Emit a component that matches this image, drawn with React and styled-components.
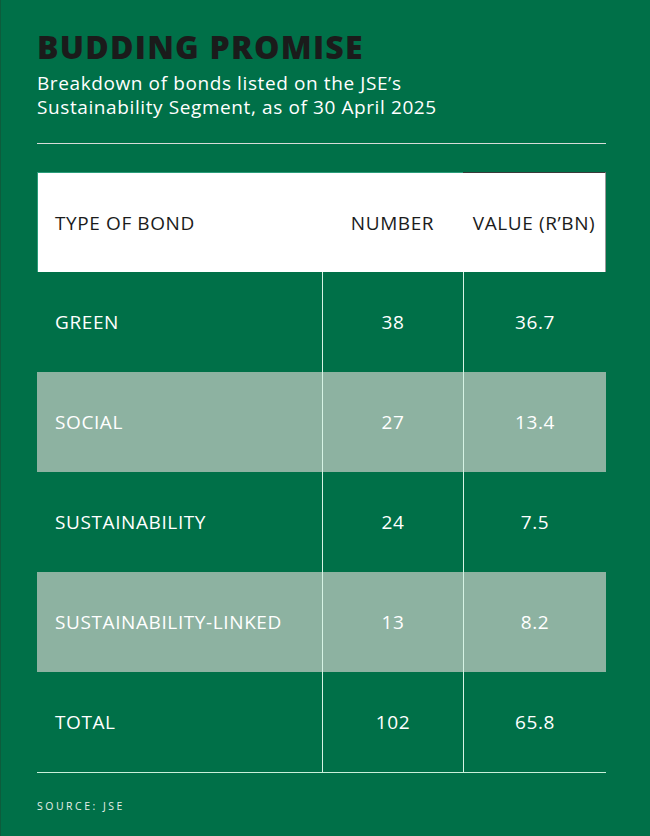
import React from "react";
import styled, { createGlobalStyle } from "styled-components";

const Global = createGlobalStyle`
  html, body { margin: 0; padding: 0; background: #007048; }
  #root { width: 650px; }
`;

const Page = styled.div`
  box-sizing: border-box;
  width: 650px;
  height: 836px;
  background: #007048;
  border-left: 1px solid #0d5c3c;
  padding: 30px 44px 0 36px;
  font-family: "Open Sans", "Liberation Sans", sans-serif;
  color: #ffffff;
`;

const Title = styled.h1`
  margin: 0;
  font-family: "Open Sans", sans-serif;
  font-weight: 800;
  font-size: 32px;
  line-height: 34px;
  color: #1b1b1b;
  letter-spacing: 1.25px;
`;

const Subtitle = styled.p`
  margin: 7px 0 0;
  font-size: 19px;
  line-height: 24px;
  font-weight: 400;
  letter-spacing: 0.6px;
  color: #ffffff;
`;

const Rule = styled.hr`
  margin: 24px 0 0;
  border: 0;
  height: 1px;
  background: #d6dcd8;
`;

const Table = styled.div`
  margin-top: 28px;
  display: flex;
  flex-direction: column;
`;

const Row = styled.div`
  display: grid;
  grid-template-columns: 285px 141px 1fr;
  height: 100px;
  background: ${(p) =>
    p.$kind === "head" ? "#ffffff" : p.$kind === "band" ? "#8db2a1" : "transparent"};
  color: ${(p) => (p.$kind === "head" ? "#1b1b1b" : "#ffffff")};
  border-bottom: ${(p) => (p.$last ? "1px solid #c9f0da" : "none")};
  ${(p) => p.$kind === "head" && "box-shadow: inset 1px 0 0 #2a9c7a;"}
`;

const Cell = styled.div`
  display: flex;
  align-items: center;
  justify-content: ${(p) => (p.$align === "center" ? "center" : "flex-start")};
  padding-left: ${(p) => (p.$align === "center" ? "0" : "18px")};
  font-size: 19px;
  letter-spacing: 0.6px;
  border-left: ${(p) => (p.$divider ? "1px solid #d6f3e4" : "none")};
  border-top: ${(p) => (p.$top ? `1px solid ${p.$top}` : "none")};
  border-right: ${(p) => (p.$right ? `1px solid ${p.$right}` : "none")};
  box-sizing: border-box;
`;

const Source = styled.div`
  margin-top: 26px;
  font-size: 10.5px;
  letter-spacing: 2.5px;
  color: #e6efe9;
`;

const rows = [
  { type: "GREEN", num: "38", val: "36.7", kind: "plain" },
  { type: "SOCIAL", num: "27", val: "13.4", kind: "band" },
  { type: "SUSTAINABILITY", num: "24", val: "7.5", kind: "plain" },
  { type: "SUSTAINABILITY-LINKED", num: "13", val: "8.2", kind: "band" },
  { type: "TOTAL", num: "102", val: "65.8", kind: "plain" },
];

export default function App() {
  return (
    <>
      <Global />
      <Page>
        <Title>BUDDING PROMISE</Title>
        <Subtitle>
          Breakdown of bonds listed on the JSE’s
          <br />
          Sustainability Segment, as of 30 April 2025
        </Subtitle>
        <Rule />
        <Table>
          <Row $kind="head">
            <Cell $top="#2a9c7a">TYPE OF BOND</Cell>
            <Cell $align="center" $top="#2a9c7a">NUMBER</Cell>
            <Cell $align="center" $top="#3a3a3a" $right="#9a9a9a">VALUE (R’BN)</Cell>
          </Row>
          {rows.map((r, i) => (
            <Row key={r.type} $kind={r.kind} $last={i === rows.length - 1}>
              <Cell>{r.type}</Cell>
              <Cell $align="center" $divider>{r.num}</Cell>
              <Cell $align="center" $divider>{r.val}</Cell>
            </Row>
          ))}
        </Table>
        <Source>SOURCE: JSE</Source>
      </Page>
    </>
  );
}
